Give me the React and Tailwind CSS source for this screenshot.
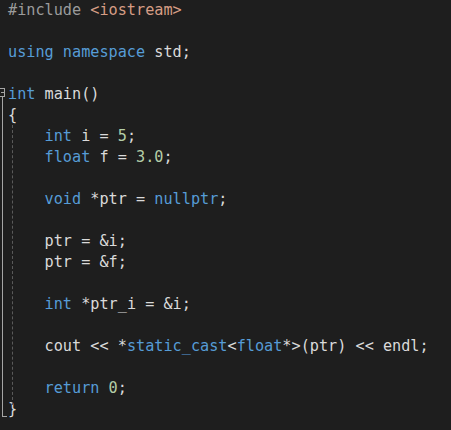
const C = {
  kw: "text-[#569cd6]",
  pp: "text-[#9b9b9b]",
  str: "text-[#d69d85]",
  num: "text-[#b5cea8]",
  txt: "text-[#dadada]",
};

const lines = [
  [["#include ", C.pp], ["<iostream>", C.str]],
  [],
  [["using namespace", C.kw], [" std;", C.txt]],
  [],
  [["int", C.kw], [" main()", C.txt]],
  [["{", C.txt]],
  [["    "], ["int", C.kw], [" i = ", C.txt], ["5", C.num], [";", C.txt]],
  [["    "], ["float", C.kw], [" f = ", C.txt], ["3.0", C.num], [";", C.txt]],
  [],
  [["    "], ["void", C.kw], [" *ptr = ", C.txt], ["nullptr", C.kw], [";", C.txt]],
  [],
  [["    ptr = &i;", C.txt]],
  [["    ptr = &f;", C.txt]],
  [],
  [["    "], ["int", C.kw], [" *ptr_i = &i;", C.txt]],
  [],
  [
    ["    cout << *", C.txt],
    ["static_cast", C.kw],
    ["<", C.txt],
    ["float", C.kw],
    ["*>(ptr) << endl;", C.txt],
  ],
  [],
  [["    "], ["return", C.kw], [" ", C.txt], ["0", C.num], [";", C.txt]],
  [["}", C.txt]],
];

export default function App() {
  return (
    <div className="relative h-[430px] w-[451px] overflow-hidden bg-[#1e1e1e]">
      {/* collapse box + outline bar */}
      <div className="absolute left-[-4px] top-[88px] h-[9px] w-[9px] border border-[#a5a5a5]">
        <div className="absolute left-[4px] top-[3px] h-px w-[3px] bg-[#a5a5a5]" />
      </div>
      <div className="absolute left-[2px] top-[97px] h-[320px] w-px bg-[#a5a5a5]" />
      <div className="absolute left-[2px] top-[416px] h-px w-[5px] bg-[#a5a5a5]" />
      {/* indent guide */}
      <div className="absolute left-[12px] top-[125px] h-[280px] border-l border-dashed border-[#5a5a5a]" />

      <div className="pl-[8px] pt-0 font-['DejaVu_Sans_Mono',monospace] text-[15.2px] leading-[21px] whitespace-pre">
        {lines.map((segs, i) => (
          <div key={i} className="h-[21px]">
            {segs.map(([t, c], j) => (
              <span key={j} className={c}>
                {t}
              </span>
            ))}
          </div>
        ))}
      </div>
    </div>
  );
}
